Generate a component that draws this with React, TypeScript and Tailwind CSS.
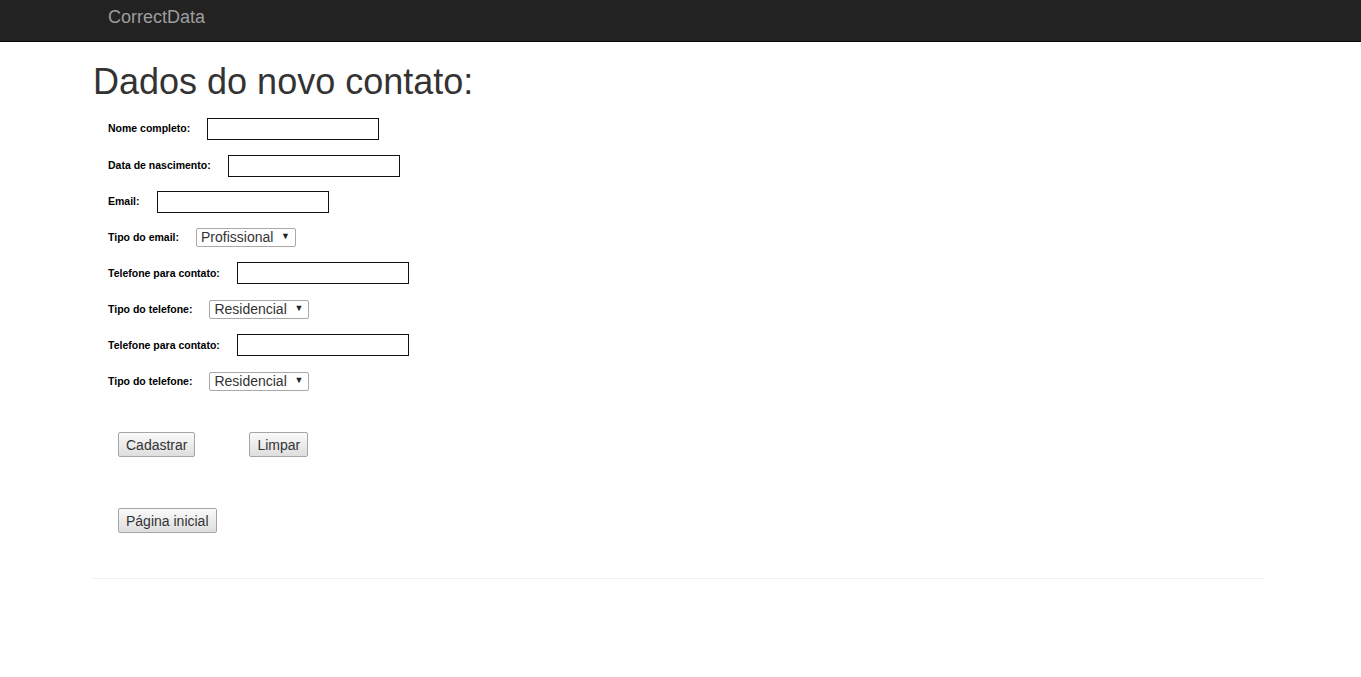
import React from "react";

const font = { fontFamily: '"Liberation Sans", Arial, Helvetica, sans-serif' };

function TextRow({ label, h = "h-9" }: { label: string; h?: string }) {
  return (
    <div className={`flex items-center gap-[17px] ${h}`}>
      <label className="pt-[1px] text-[10.5px] font-bold text-black">{label}</label>
      <input
        type="text"
        className="block w-[172px] h-[22px] border border-[#111] bg-white px-1 text-[13px] outline-none"
      />
    </div>
  );
}

function SelectRow({ label, value }: { label: string; value: string }) {
  return (
    <div className="flex items-center h-9 gap-[17px]">
      <label className="pt-[1px] text-[10.5px] font-bold text-black">{label}</label>
      <div className="relative w-[100px] h-[19px]">
        <select
          defaultValue={value}
          className="block appearance-none w-full h-full border border-[#a9a9a9] rounded-[2px] bg-white pl-[4px] py-0 text-[14px] leading-[17px] text-[#333] outline-none"
        >
          <option>{value}</option>
        </select>
        <span className="pointer-events-none absolute right-[6px] inset-y-0 flex items-center text-[9px] text-[#222]">
          ▼
        </span>
      </div>
    </div>
  );
}

function Btn({ children }: { children: React.ReactNode }) {
  return (
    <button className="h-[25px] px-[7px] border border-[#a6a6a6] rounded-[2px] bg-gradient-to-b from-[#fafafa] to-[#dedede] text-[14px] text-[#333] leading-none">
      {children}
    </button>
  );
}

export default function App() {
  return (
    <div className="min-h-[677px] bg-white" style={font}>
      <nav className="h-[42px] bg-[#222] border-b border-[#080808]">
        <div className="ml-[108px] pt-[7px] text-[18px] leading-[20px] text-[#9d9d9d]">
          CorrectData
        </div>
      </nav>

      <main className="ml-[93px] w-[1171px]">
        <h1 className="mt-[20px] mb-[8px] text-[36px] leading-[40px] text-[#333]">
          Dados do novo contato:
        </h1>

        <form className="pl-[15px]">
          <TextRow label="Nome completo:" h="h-[37px]" />
          <TextRow label="Data de nascimento:" h="h-[37px]" />
          <TextRow label="Email:" h="h-[35px]" />
          <SelectRow label="Tipo do email:" value="Profissional" />
          <TextRow label="Telefone para contato:" />
          <SelectRow label="Tipo do telefone:" value="Residencial" />
          <TextRow label="Telefone para contato:" />
          <SelectRow label="Tipo do telefone:" value="Residencial" />

          <div className="flex gap-[54px] pl-[10px] mt-[33px]">
            <Btn>Cadastrar</Btn>
            <Btn>Limpar</Btn>
          </div>

          <div className="pl-[10px] mt-[51px]">
            <Btn>Página inicial</Btn>
          </div>
        </form>

        <hr className="mt-[45px] border-t border-[#eee]" />
      </main>
    </div>
  );
}
